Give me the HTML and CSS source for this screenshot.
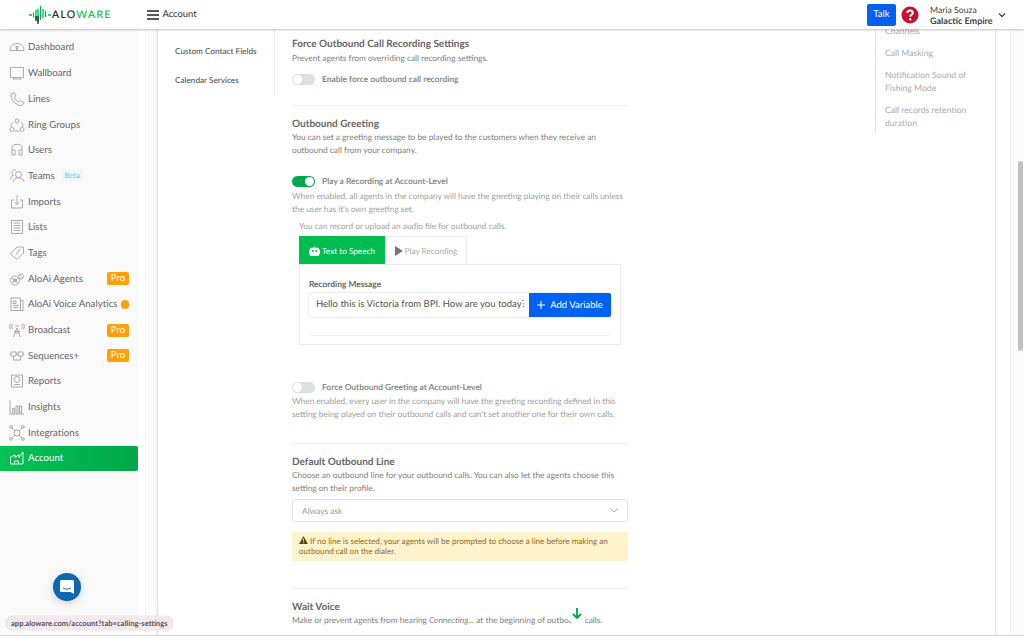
FILE: index.html
```html
<!DOCTYPE html>
<html lang="en">
<head>
<meta charset="utf-8">
<title>Account - Aloware</title>
<link rel="stylesheet" href="styles.css">
</head>
<body>
<div class="app">
<header class="topbar">
  <div class="logo">
    <svg class="logo-mark" width="22" height="19" viewBox="0 0 22 19"><path d="M0 10H3M4.500 7.500V12.500M7 5V14M9 4V17M11.500 1V15M14 4V13M16.500 6V12M19 10H22" stroke="#00b84a" stroke-width="1.300" fill="none"/><path d="M9 11V19M7 11V16" stroke="#222" stroke-width="1.300"/></svg>
    <span class="logo-text">ALO<em>WARE</em></span>
  </div>
  <div class="crumb">
    <svg width="12" height="10" viewBox="0 0 12 10"><path d="M0 1H12M0 5H12M0 9H12" stroke="#222" stroke-width="1.700"/></svg>
    <span>Account</span>
  </div>
  <div class="top-right">
    <button class="talk">Talk</button>
    <svg class="help" width="18" height="18" viewBox="0 0 18 18"><circle cx="9" cy="9" r="8.500" fill="#c4122f"/><path d="M6.300 7C6.300 5.300 7.500 4.500 9 4.500C10.600 4.500 11.800 5.400 11.800 6.900C11.800 8.800 9.200 8.800 9.200 10.800" stroke="#fff" stroke-width="2" fill="none"/><circle cx="9.200" cy="13.300" r="1.200" fill="#fff"/></svg>
    <div class="user"><div>Maria Souza</div><div class="org">Galactic Empire</div></div>
    <svg class="caret" width="8" height="6" viewBox="0 0 8 6"><path d="M1 1.500L4 4.500L7 1.500" stroke="#444" stroke-width="1.300" fill="none"/></svg>
  </div>
</header>
<div class="body-row">
  <nav class="sidebar">
    <a class="item"><svg viewBox="0 0 16 16"><path d="M1 11.500C1 7.500 4 4.500 8 4.500S15 7.500 15 11.500ZM8 11L6.800 7.500H9.200Z"/></svg>Dashboard</a>
    <a class="item"><svg viewBox="0 0 16 16"><path d="M1.500 2.500H14.500V12.500H1.500ZM4.500 12.500V14.500M11.500 12.500V14.500M4 14H12"/></svg>Wallboard</a>
    <a class="item"><svg viewBox="0 0 16 16"><path d="M2 3L5 1.500L7 5L5.500 6.500C6 8.500 8 10.500 10 11L11.500 9.500L15 11.500L13 14.500C7 15 1.500 9 2 3Z"/></svg>Lines</a>
    <a class="item"><svg viewBox="0 0 16 16"><circle cx="8" cy="4" r="2"/><circle cx="3" cy="12.500" r="2"/><circle cx="13" cy="12.500" r="2"/><path d="M4 5C2.500 6.500 2 8 2 10M12 5C13.500 6.500 14 8 14 10M5.500 14H10.500"/></svg>Ring Groups</a>
    <a class="item"><svg viewBox="0 0 16 16"><path d="M3 8V5C3 1.500 13 1.500 13 5V8M3 8H6V13H3ZM10 8H13V13H10Z"/></svg>Users</a>
    <a class="item"><svg viewBox="0 0 16 16"><circle cx="9.500" cy="6.500" r="3"/><path d="M4 14C4 8.500 15 8.500 15 14M7 2C5 1 3 2.500 3 4.500C3 6 3.500 7 4.500 7.500C2.500 8 1.500 9.500 1.500 11.500"/></svg><span>Teams</span><span class="beta">Beta</span></a>
    <a class="item"><svg viewBox="0 0 16 16"><path d="M5 6H2.500V14H13.500V6H11M8 1V10.500M5.500 8L8 10.500L10.500 8"/></svg>Imports</a>
    <a class="item"><svg viewBox="0 0 16 16"><path d="M2.500 1.500H13.500V14.500H2.500ZM4.500 4H11.500M4.500 6.500H11.500M4.500 9H11.500M4.500 11.500H11.500"/></svg>Lists</a>
    <a class="item"><svg viewBox="0 0 16 16"><path d="M1.500 9L8 2H14.500V8L8 14.500ZM10.500 4L7 10"/></svg>Tags</a>
    <a class="item"><svg viewBox="0 0 16 16"><circle cx="6" cy="9.500" r="4.500"/><circle cx="12" cy="5.500" r="2.500"/><circle cx="6" cy="9.500" r="1.500"/><path d="M4 9H8M3 7L9 12M9 7L3 12M10.500 4.500L13.500 6.500"/></svg><span class="grow">AloAi Agents</span><span class="pro">Pro</span></a>
    <a class="item"><svg viewBox="0 0 16 16"><path d="M2 2H11.500V14.500H2ZM11.500 4.500H14V14.500H11.500M4 5H7V7.500H4ZM4 9.500H9.500M4 11.500H9.500"/></svg><span class="grow">AloAi Voice Analytics</span><span class="dot"></span></a>
    <a class="item"><svg viewBox="0 0 16 16"><path d="M8 6L4.500 15M8 6L11.500 15M6 11H10M5 9.500H11M6 4H10M3.500 2C2.500 3.500 2.500 5.500 3.500 7M12.500 2C13.500 3.500 13.500 5.500 12.500 7M1.500 1.500C.5 3.500 .5 5.500 1.500 7.500M14.500 1.500C15.500 3.500 15.500 5.500 14.500 7.500"/></svg><span class="grow">Broadcast</span><span class="pro">Pro</span></a>
    <a class="item"><svg viewBox="0 0 16 16"><path d="M2 4H7V8H2ZM9 4H14V8H9ZM4.500 8V12H11.500V8M0.500 6H2M7 6H9M14 6H15.500"/></svg><span class="grow">Sequences+</span><span class="pro">Pro</span></a>
    <a class="item"><svg viewBox="0 0 16 16"><path d="M2.500 2H13.500V14H2.500ZM5 11.500H11"/><circle cx="8" cy="6.500" r="3"/></svg>Reports</a>
    <a class="item"><svg viewBox="0 0 16 16"><path d="M1 1V15H15M3.500 9.500H5.500V14H3.500ZM7 7H9V14H7ZM10.500 7H12.500V14H10.500Z"/></svg>Insights</a>
    <a class="item"><svg viewBox="0 0 16 16"><circle cx="8" cy="8" r="3"/><circle cx="2" cy="2" r="1.300"/><circle cx="14" cy="2" r="1.300"/><circle cx="2" cy="14" r="1.300"/><circle cx="14" cy="14" r="1.300"/><path d="M3 3L6 6M13 3L10 6M3 13L6 10M13 13L10 10"/></svg>Integrations</a>
    <a class="item active"><svg viewBox="0 0 16 16"><path d="M1.500 14V7L6 5V7.500L10 4.500V7.500L14 2V14ZM5.500 14V11H9.500V14"/></svg>Account</a>
  </nav>
  <div class="gutter"></div>
  <main class="card">
    <aside class="left-nav">
      <a>Custom Contact Fields</a>
      <a>Calendar Services</a>
    </aside>
    <section class="settings">
      <div class="block first">
        <h3>Force Outbound Call Recording Settings</h3>
        <p>Prevent agents from overriding call recording settings.</p>
        <label class="switch-row top10"><span class="switch"></span><b>Enable force outbound call recording</b></label>
      </div>
      <div class="block greeting">
        <h3>Outbound Greeting</h3>
        <p>You can set a greeting message to be played to the customers when they receive an outbound call from your company.</p>
        <label class="switch-row top18"><span class="switch on"></span><b>Play a Recording at Account-Level</b></label>
        <p class="light">When enabled, all agents in the company will have the greeting playing on their calls unless the user has it's own greeting set.</p>
        <div class="recorder">
          <p class="light">You can record or upload an audio file for outbound calls.</p>
          <div class="tabs">
            <span class="tab active"><svg width="11" height="10" viewBox="0 0 11 10"><path d="M5.500 0V2M2.500 2H8.500A1.500 1.500 0 0 1 10 3.500V8.500A1.500 1.500 0 0 1 8.500 10H2.500A1.500 1.500 0 0 1 1 8.500V3.500A1.500 1.500 0 0 1 2.500 2Z" fill="#fff" stroke="#fff" stroke-width=".6"/><circle cx="3.800" cy="5" r="1" fill="#00bd4f"/><circle cx="7.200" cy="5" r="1" fill="#00bd4f"/><path d="M0 4H1V8H0ZM10 4H11V8H10Z" fill="#fff"/></svg>Text to Speech</span>
            <span class="tab"><svg width="8" height="10" viewBox="0 0 8 10"><path d="M0 0L8 5L0 10Z" fill="#777"/></svg>Play Recording</span>
          </div>
          <div class="panel">
            <div class="field-label">Recording Message</div>
            <div class="input-group">
              <span class="input">Hello this is Victoria from BPI. How are you today?</span>
              <button class="add"><svg width="8" height="8" viewBox="0 0 8 8"><path d="M4 0V8M0 4H8" stroke="#fff" stroke-width="1.100"/></svg>Add Variable</button>
            </div>
            <div class="panel-rule"></div>
          </div>
        </div>
        <label class="switch-row top36"><span class="switch"></span><b>Force Outbound Greeting at Account-Level</b></label>
        <p class="light">When enabled, every user in the company will have the greeting recording defined in this setting being played on their outbound calls and can't set another one for their own calls.</p>
      </div>
      <div class="block line">
        <h3>Default Outbound Line</h3>
        <p>Choose an outbound line for your outbound calls. You can also let the agents choose this setting on their profile.</p>
        <div class="select"><span>Always ask</span><svg width="8" height="5" viewBox="0 0 8 5"><path d="M.5 .5L4 4L7.500 .5" stroke="#aaa" fill="none"/></svg></div>
        <div class="alert"><svg width="9" height="8" viewBox="0 0 10 9"><path d="M5 0L10 9H0Z" fill="#5c4a14"/><path d="M5 3V6M5 7V8" stroke="#fff3cd"/></svg> If no line is selected, your agents will be prompted to choose a line before making an outbound call on the dialer.</div>
      </div>
      <div class="block wait">
        <h3>Wait Voice</h3>
        <p>Make or prevent agents from hearing <i>Connecting...</i> at the beginning of outbound calls.</p>
        <label class="switch-row top8"><span class="switch"></span></label>
      </div>
    </section>
    <aside class="right-nav">
      <a>Channels</a>
      <a>Call Masking</a>
      <a>Notification Sound of Fishing Mode</a>
      <a>Call records retention duration</a>
    </aside>
  </main>
  <div class="track"><div class="thumb"></div></div>
</div>
</div>
<div class="chat"><svg width="14" height="14" viewBox="0 0 14 14"><path d="M1.500 0H12.500A1.500 1.500 0 0 1 14 1.500V14L10.500 12H1.500A1.500 1.500 0 0 1 0 10.500V1.500A1.500 1.500 0 0 1 1.500 0Z" fill="#fff"/><path d="M3 8C5 9.500 9 9.500 11 8" stroke="#0a68ae" stroke-width="1" fill="none"/></svg></div>
<div class="status-url">app.aloware.com/account?tab=calling-settings</div>
<div class="scroll-down"><svg width="10" height="11" viewBox="0 0 10 11"><path d="M5 0V10M1 6L5 10L9 6" stroke="#00a84f" stroke-width="1.800" fill="none"/></svg></div>
</body>
</html>
```
FILE: styles.css
```css
* { box-sizing: border-box; }
html, body { margin: 0; height: 100%; overflow: hidden; }
body { font-family: Lato, "Noto Sans", sans-serif; color: #666; background: #fff; font-size: 10px; text-rendering: geometricPrecision; }
.app { height: 636px; display: flex; flex-direction: column; border-bottom: 1px solid #d0d0d0; }
.topbar { height: 29px; flex: none; display: flex; align-items: center; background: #fff; box-shadow: 0 1px 2px rgba(0,0,0,.25); position: relative; z-index: 2; }
.logo { width: 147px; padding-left: 29px; display: flex; align-items: center; gap: 1px; }
.logo-mark { flex: none; }
.logo-text { font-size: 10.500px; font-weight: 400; letter-spacing: 1.300px; color: #222; -webkit-text-stroke: .2px currentColor; }
.logo-text em { font-style: normal; color: #13c255; }
.crumb { display: flex; align-items: center; gap: 3.500px; color: #333; font-size: 9.400px; }
.top-right { margin-left: auto; display: flex; align-items: center; padding-right: 18px; }
.talk { width: 29px; height: 22px; border: 0; border-radius: 2px; background: #0061f2; color: #fff; font: 9.500px Lato, sans-serif; padding: 0; margin-right: 5px; text-rendering: geometricPrecision; }
.help { margin-right: 11px; }
.user { font-size: 8.700px; line-height: 11px; color: #444; width: 68px; }
.org { font-weight: 700; font-size: 9px; }
.caret { margin-left: 0; }
.body-row { flex: 1; min-height: 0; display: flex; }
.sidebar { width: 138px; flex: none; background: #fafafa; padding-top: 5.600px; display: flex; flex-direction: column; }
.item { height: 25.700px; flex: none; display: flex; align-items: center; padding: 0 9px; gap: 3px; font-size: 9.700px; color: #666; white-space: nowrap; }
.item svg { width: 16px; height: 16px; flex: none; fill: none; stroke: #a3a3a3; stroke-width: .9; }
.item.active { background: linear-gradient(90deg, #05c254, #00a64a); color: #fff; border-radius: 0 2px 2px 0; box-shadow: 0 0 1px rgba(0,0,0,.2); }
.item.active svg { stroke: #fff; }
.grow { flex: 1; }
.beta { margin-left: 4px; width: 21px; text-align: center; height: 11px; line-height: 11px; font-size: 7.500px; background: #eef6f8; color: #6cc5e4; border-radius: 2px; }
.pro { width: 22px; height: 13px; line-height: 13px; text-align: center; border-radius: 2px; background: #ff9f0a; color: #fff; font-size: 9.500px; }
.dot { width: 8.500px; height: 8.500px; flex: none; border-radius: 50%; background: #ff9f0a; }
.gutter { width: 19px; flex: none; border-left: 7px solid #fff; background: linear-gradient(90deg, #efefef 0 1px, #fdfdfd 1px); }
.card { width: 839px; flex: none; overflow: hidden; display: flex; border-left: 1px solid #e4e4e4; border-right: 1px solid #e4e4e4; box-shadow: -1px 0 2px rgba(0,0,0,.06); }
.left-nav { width: 117px; flex: none; height: 67px; border-right: 1px solid #e8e8e8; padding: 15.500px 0 0 17px; display: flex; flex-direction: column; gap: 16px; font-size: 8.200px; font-weight: 500; color: #555; }
.left-nav a { line-height: 13px; }
.settings { width: 336px; flex: none; margin-left: 17px; padding-top: 9px; }
.block { border-bottom: 1px solid #f0f0f0; }
.block.wait { border: 0; }
h3 { margin: 0; font-size: 10px; line-height: 13px; font-weight: 700; color: #666; }
p { margin: 0; line-height: 13px; color: #808080; font-size: 8.330px; }
p.light { color: #a0a0a0; }
.first { height: 67.500px; margin-bottom: 12px; }
h3 + p { margin-top: .5px; }
.switch-row { display: flex; align-items: center; height: 11px; gap: 7px; }
.switch-row b { font-size: 8.400px; font-weight: 700; color: #8a8a8a; }
.top10 { margin-top: 9px; }
.top18 { margin-top: 18.500px; margin-bottom: 3px; }
.top36 { margin-top: 36.500px; margin-bottom: 2.500px; }
.top8 { margin-top: 8px; }
.switch { width: 23px; height: 11px; border-radius: 6px; background: #dcdfe6; position: relative; flex: none; }
.switch::after { content: ""; position: absolute; left: 1px; top: 1px; width: 9px; height: 9px; border-radius: 50%; background: #fff; }
.switch.on { background: #00a84f; }
.switch.on::after { left: 13px; }
.greeting { padding-bottom: 21.500px; }
.recorder { margin-top: 4.500px; margin-left: 7px; width: 322px; }
.tabs { display: flex; margin-top: 3px; height: 28px; }
.tab { display: flex; align-items: center; justify-content: center; gap: 2px; width: 82px; border: 1px solid #eee; border-bottom: 0; color: #aaa; font-size: 8.200px; }
.tab.active { width: 86px; background: #00bd4f; border-color: #00bd4f; color: #fff; }
.panel { height: 81px; border: 1px solid #ebebeb; padding: 13px 9px 0; box-shadow: 0 0 1px rgba(0,0,0,.05); }
.field-label { font-size: 8.400px; font-weight: 700; color: #666; line-height: 13px; }
.input-group { display: flex; height: 24px; margin-top: 2px; border-radius: 3px; box-shadow: 0 0 0 1px #f0f0f0; }
.input { width: 208px; margin: 0 5px 0 7px; overflow: hidden; white-space: nowrap; line-height: 24px; font-size: 9.500px; color: #555; }
.add { width: 82px; border: 0; border-radius: 0 2px 2px 0; background: #0061f2; color: #fff; font: 9.500px Lato, sans-serif; display: flex; align-items: center; justify-content: center; gap: 5px; padding: 0; text-rendering: geometricPrecision; }
.panel-rule { height: 1px; margin-top: 18px; background: #f2f2f2; }
.line { margin-top: 12px; padding-bottom: 27px; }
.select { display: flex; align-items: center; justify-content: space-between; height: 23px; margin-top: 4px; padding: 0 9px; border: 1px solid #e4e4e4; border-radius: 3px; color: #999; font-size: 8.400px; }
.alert { margin-top: 9.500px; height: 29.500px; padding: 4.500px 7px; line-height: 9.500px; background: #fff3cd; color: #8a6d1f; font-size: 8.100px; }
.wait { margin-top: 11.500px; }
.right-nav { width: 120px; flex: none; margin-left: 247px; margin-top: -5px; padding: 0 25px 0 9px; height: 110px; border-left: 1px solid #e4e4e4; display: flex; flex-direction: column; gap: 8.500px; color: #aaa; font-size: 8.650px; line-height: 13.300px; }
.track { flex: 1; position: relative; border-left: 1px solid #f2f2f2; margin-left: 14px; background: #fcfcfc; }
.thumb { position: absolute; left: 7px; top: 132px; width: 5px; height: 190px; border-radius: 3px; background: #c2c2c2; }
.chat { position: absolute; left: 53px; top: 573px; width: 28px; height: 28px; border-radius: 50%; background: #0a68ae; display: flex; align-items: center; justify-content: center; box-shadow: 0 2px 8px rgba(0,0,0,.18); }
.status-url { position: absolute; left: 6px; top: 616px; height: 14px; line-height: 14px; padding: 0 5px; border-radius: 7px; background: #f6e9ee; box-shadow: 0 0 1px rgba(0,0,0,.3); color: #555; font-size: 7.600px; font-weight: 700; }
.scroll-down { position: absolute; left: 566px; top: 602px; width: 22px; height: 22px; border-radius: 50%; background: #fff; display: flex; align-items: center; justify-content: center; }
```
